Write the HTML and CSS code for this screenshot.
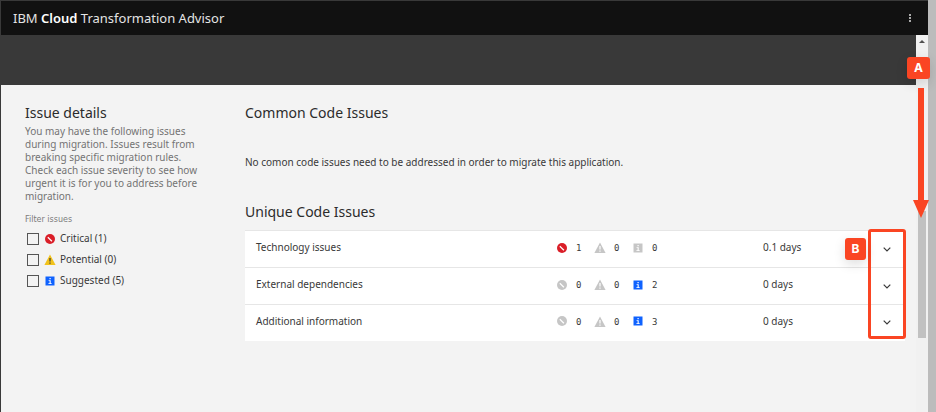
FILE: index.html
```html
<!DOCTYPE html>
<html lang="en">
<head>
<meta charset="utf-8">
<title>IBM Cloud Transformation Advisor</title>
<link rel="stylesheet" href="styles.css">
</head>
<body>
<svg class="sprite" aria-hidden="true">
  <symbol id="critical" viewBox="0 0 10 10"><circle cx="5" cy="5" r="5" fill="currentColor" stroke="none"/><path d="M2.8 3.2 6.9 7.2" stroke="#fff" stroke-width="1.2"/></symbol>
  <symbol id="warning" viewBox="0 0 12 11"><path d="M6 .4 11.6 11H.4z" fill="currentColor" stroke="none"/><path d="M6 4v3.6M6 8.5v1.2" stroke-width="1.2"/></symbol>
  <symbol id="info" viewBox="0 0 10 10"><path d="M.5.5h9v9h-9z" fill="currentColor" stroke="none"/><path d="M4.5 2h1.2v1.2H4.500zM3.600 4.200h2.100v3h1v.9H3.400v-.9h1.200V5.100h-1z" fill="#fff" stroke="none"/></symbol>
  <symbol id="chevron" viewBox="0 0 8 5"><path d="M.7.7 4 4 7.300.7" fill="none" stroke="currentColor" stroke-width="1.200"/></symbol>
</svg>
<div class="app">
  <header class="topbar">
    <h1>IBM <b>Cloud</b> Transformation Advisor</h1>
    <button class="overflow" type="button" aria-label="More options"><svg viewBox="0 0 2 8"><path d="M0 0h2v2H0zM0 3h2v2H0zM0 6h2v2H0z" fill="currentColor"/></svg></button>
  </header>
  <div class="viewport">
    <div class="page">
      <div class="banner"></div>
      <main class="columns">
        <aside class="details">
          <h2>Issue details</h2>
          <p class="intro">You may have the following issues during migration. Issues result from breaking specific migration rules. Check each issue severity to see how urgent it is for you to address before migration.</p>
          <fieldset class="filters">
            <legend>Filter issues</legend>
            <label><input type="checkbox"><svg class="icon red"><use href="#critical"/></svg>Critical (1)</label>
            <label><input type="checkbox"><svg class="icon wide yellow"><use href="#warning"/></svg>Potential (0)</label>
            <label><input type="checkbox"><svg class="icon blue"><use href="#info"/></svg>Suggested (5)</label>
          </fieldset>
        </aside>
        <section class="issues">
          <h2>Common Code Issues</h2>
          <p class="empty">No comon code issues need to be addressed in order to migrate this application.</p>
          <h2>Unique Code Issues</h2>
          <div class="table-wrap">
            <table>
              <tbody>
                <tr>
                  <th scope="row">Technology issues</th>
                  <td class="counts"><div class="tally"><svg class="icon red"><use href="#critical"/></svg><span>1</span><svg class="icon wide off"><use href="#warning"/></svg><span>0</span><svg class="icon off"><use href="#info"/></svg><span>0</span></div></td>
                  <td class="days">0.1 days</td>
                  <td class="toggle"><button type="button" aria-label="Expand Technology issues"><svg><use href="#chevron"/></svg></button></td>
                </tr>
                <tr>
                  <th scope="row">External dependencies</th>
                  <td class="counts"><div class="tally"><svg class="icon off"><use href="#critical"/></svg><span>0</span><svg class="icon wide off"><use href="#warning"/></svg><span>0</span><svg class="icon blue"><use href="#info"/></svg><span>2</span></div></td>
                  <td class="days">0 days</td>
                  <td class="toggle"><button type="button" aria-label="Expand External dependencies"><svg><use href="#chevron"/></svg></button></td>
                </tr>
                <tr>
                  <th scope="row">Additional information</th>
                  <td class="counts"><div class="tally"><svg class="icon off"><use href="#critical"/></svg><span>0</span><svg class="icon wide off"><use href="#warning"/></svg><span>0</span><svg class="icon blue"><use href="#info"/></svg><span>3</span></div></td>
                  <td class="days">0 days</td>
                  <td class="toggle"><button type="button" aria-label="Expand Additional information"><svg><use href="#chevron"/></svg></button></td>
                </tr>
              </tbody>
            </table>
            <div class="frame"></div>
            <span class="badge badge-b">B</span>
          </div>
        </section>
      </main>
    </div>
    <div class="scrollbar">
      <svg class="up" viewBox="0 0 6 3"><path d="M3 0 6 3H0z" fill="#505050"/></svg>
      <div class="thumb"></div>
      <span class="badge badge-a">A</span>
      <svg class="arrow" viewBox="0 0 16 130"><path d="M5 0h6v112h5L8 130 0 112h5z" fill="#fa4523"/></svg>
    </div>
  </div>
</div>
</body>
</html>
```

FILE: styles.css
```css
* {
  box-sizing: border-box;
}

body {
  margin: 0;
  background: #bcbcbc;
  color: #393939;
  font: 10px/13px "Noto Sans", sans-serif;
}

h1, h2, p {
  margin: 0;
  font-weight: 400;
}

button {
  padding: 0;
  border: 0;
  background: none;
  color: inherit;
}

.sprite {
  display: none;
}

.app {
  display: flex;
  flex-direction: column;
  min-height: 100vh;
  margin-right: 8px;
  border-top: 1px solid #393939;
  border-left: 1px solid #393939;
  background: #f3f3f3;
}

.topbar {
  display: flex;
  align-items: center;
  justify-content: space-between;
  height: 34px;
  padding: 0 17px 1px 12px;
  background: #111;
  color: #e4e4e4;
}

.topbar h1 {
  font-size: 13px;
  line-height: 18px;
}

.topbar b {
  color: #fff;
  font-weight: 600;
}

.overflow svg {
  display: block;
  width: 2px;
  height: 8px;
  color: #aaa;
}

.viewport {
  display: flex;
  flex: 1;
}

.page {
  flex: 1;
}

.banner {
  height: 50px;
  background: #393939;
}

.columns {
  display: grid;
  grid-template-columns: 180px 1fr;
  gap: 40px;
  padding: 18px 11px 0 24px;
}

h2 {
  color: #2b2b2b;
  font-size: 14px;
  line-height: 20px;
}

.intro {
  margin-top: 2px;
  color: #747474;
}

.filters {
  margin: 12px 0 0;
  padding: 0;
  border: 0;
}

.filters legend {
  padding: 0;
  color: #7c7c7c;
  font: 8px/10px "DejaVu Sans", sans-serif;
}

.filters label {
  display: flex;
  align-items: center;
  height: 21px;
  padding-left: 2px;
}

.filters legend + label {
  margin-top: 3px;
}

.filters input {
  appearance: none;
  width: 12px;
  height: 12px;
  margin: 0 5px 0 0;
  border: 1px solid #555;
}

.filters .icon {
  margin-right: 5px;
}

.icon {
  flex: none;
  width: 10px;
  height: 10px;
  margin: 0 1px;
}

.icon.wide {
  width: 12px;
  height: 11px;
  margin-left: 0;
  margin-right: 0;
}

.filters .icon.wide {
  margin-right: 4px;
}

.red { color: #da1e28; }
.blue { color: #0f62fe; }
.off { color: #c6c6c6; stroke: #fff; }
.yellow { color: #f1c21b; stroke: #393939; }

.empty {
  margin: 33px 0;
}

.table-wrap {
  position: relative;
  margin-top: 8px;
}

table {
  width: 100%;
  border-collapse: collapse;
  table-layout: fixed;
  background: #fff;
}

tr {
  height: 37px;
  border-top: 1px solid #e6e6e6;
}

tr:last-child {
  height: 36px;
}

th, td {
  padding: 0 0 3px;
  text-align: left;
  font-weight: 400;
}

th {
  padding-left: 11px;
}

.counts {
  width: 207px;
}

.days {
  width: 105px;
}

.toggle {
  width: 37px;
  padding: 0;
}

.toggle button {
  display: block;
  margin: 0 auto;
  padding: 4px;
}

.toggle svg {
  display: block;
  width: 8px;
  height: 5px;
}

.tally {
  display: flex;
  align-items: center;
  font: 9px/13px "DejaVu Sans Mono", monospace;
}

.tally span {
  width: 5px;
  margin: 0 13px 0 8px;
  padding-top: 2px;
}

.frame {
  position: absolute;
  top: -1px;
  right: -1px;
  bottom: 2px;
  width: 38px;
  border: 3px solid #fa4523;
  border-radius: 3px;
}

.badge {
  position: absolute;
  display: grid;
  place-items: center;
  width: 22px;
  height: 22px;
  border-radius: 3px;
  background: #fa4523;
  color: #fff;
  font: 700 12px/22px Inter, sans-serif;
}

.badge-b {
  top: 8px;
  right: 39px;
  width: 21px;
  box-shadow: 0 4px 12px #0002;
}

.badge-a {
  top: 22px;
  right: -2px;
  width: 23px;
  box-shadow: 0 4px 12px #0002;
}

.scrollbar {
  position: relative;
  width: 12px;
  background: #f1f1f1;
}

.up {
  display: block;
  width: 6px;
  height: 3px;
  margin: 5px auto 0;
}

.thumb {
  width: 8px;
  height: 127px;
  margin: 168px auto 0;
  background: #c1c1c1;
}

.arrow {
  position: absolute;
  top: 53px;
  left: -3px;
  width: 16px;
  height: 130px;
}
```
